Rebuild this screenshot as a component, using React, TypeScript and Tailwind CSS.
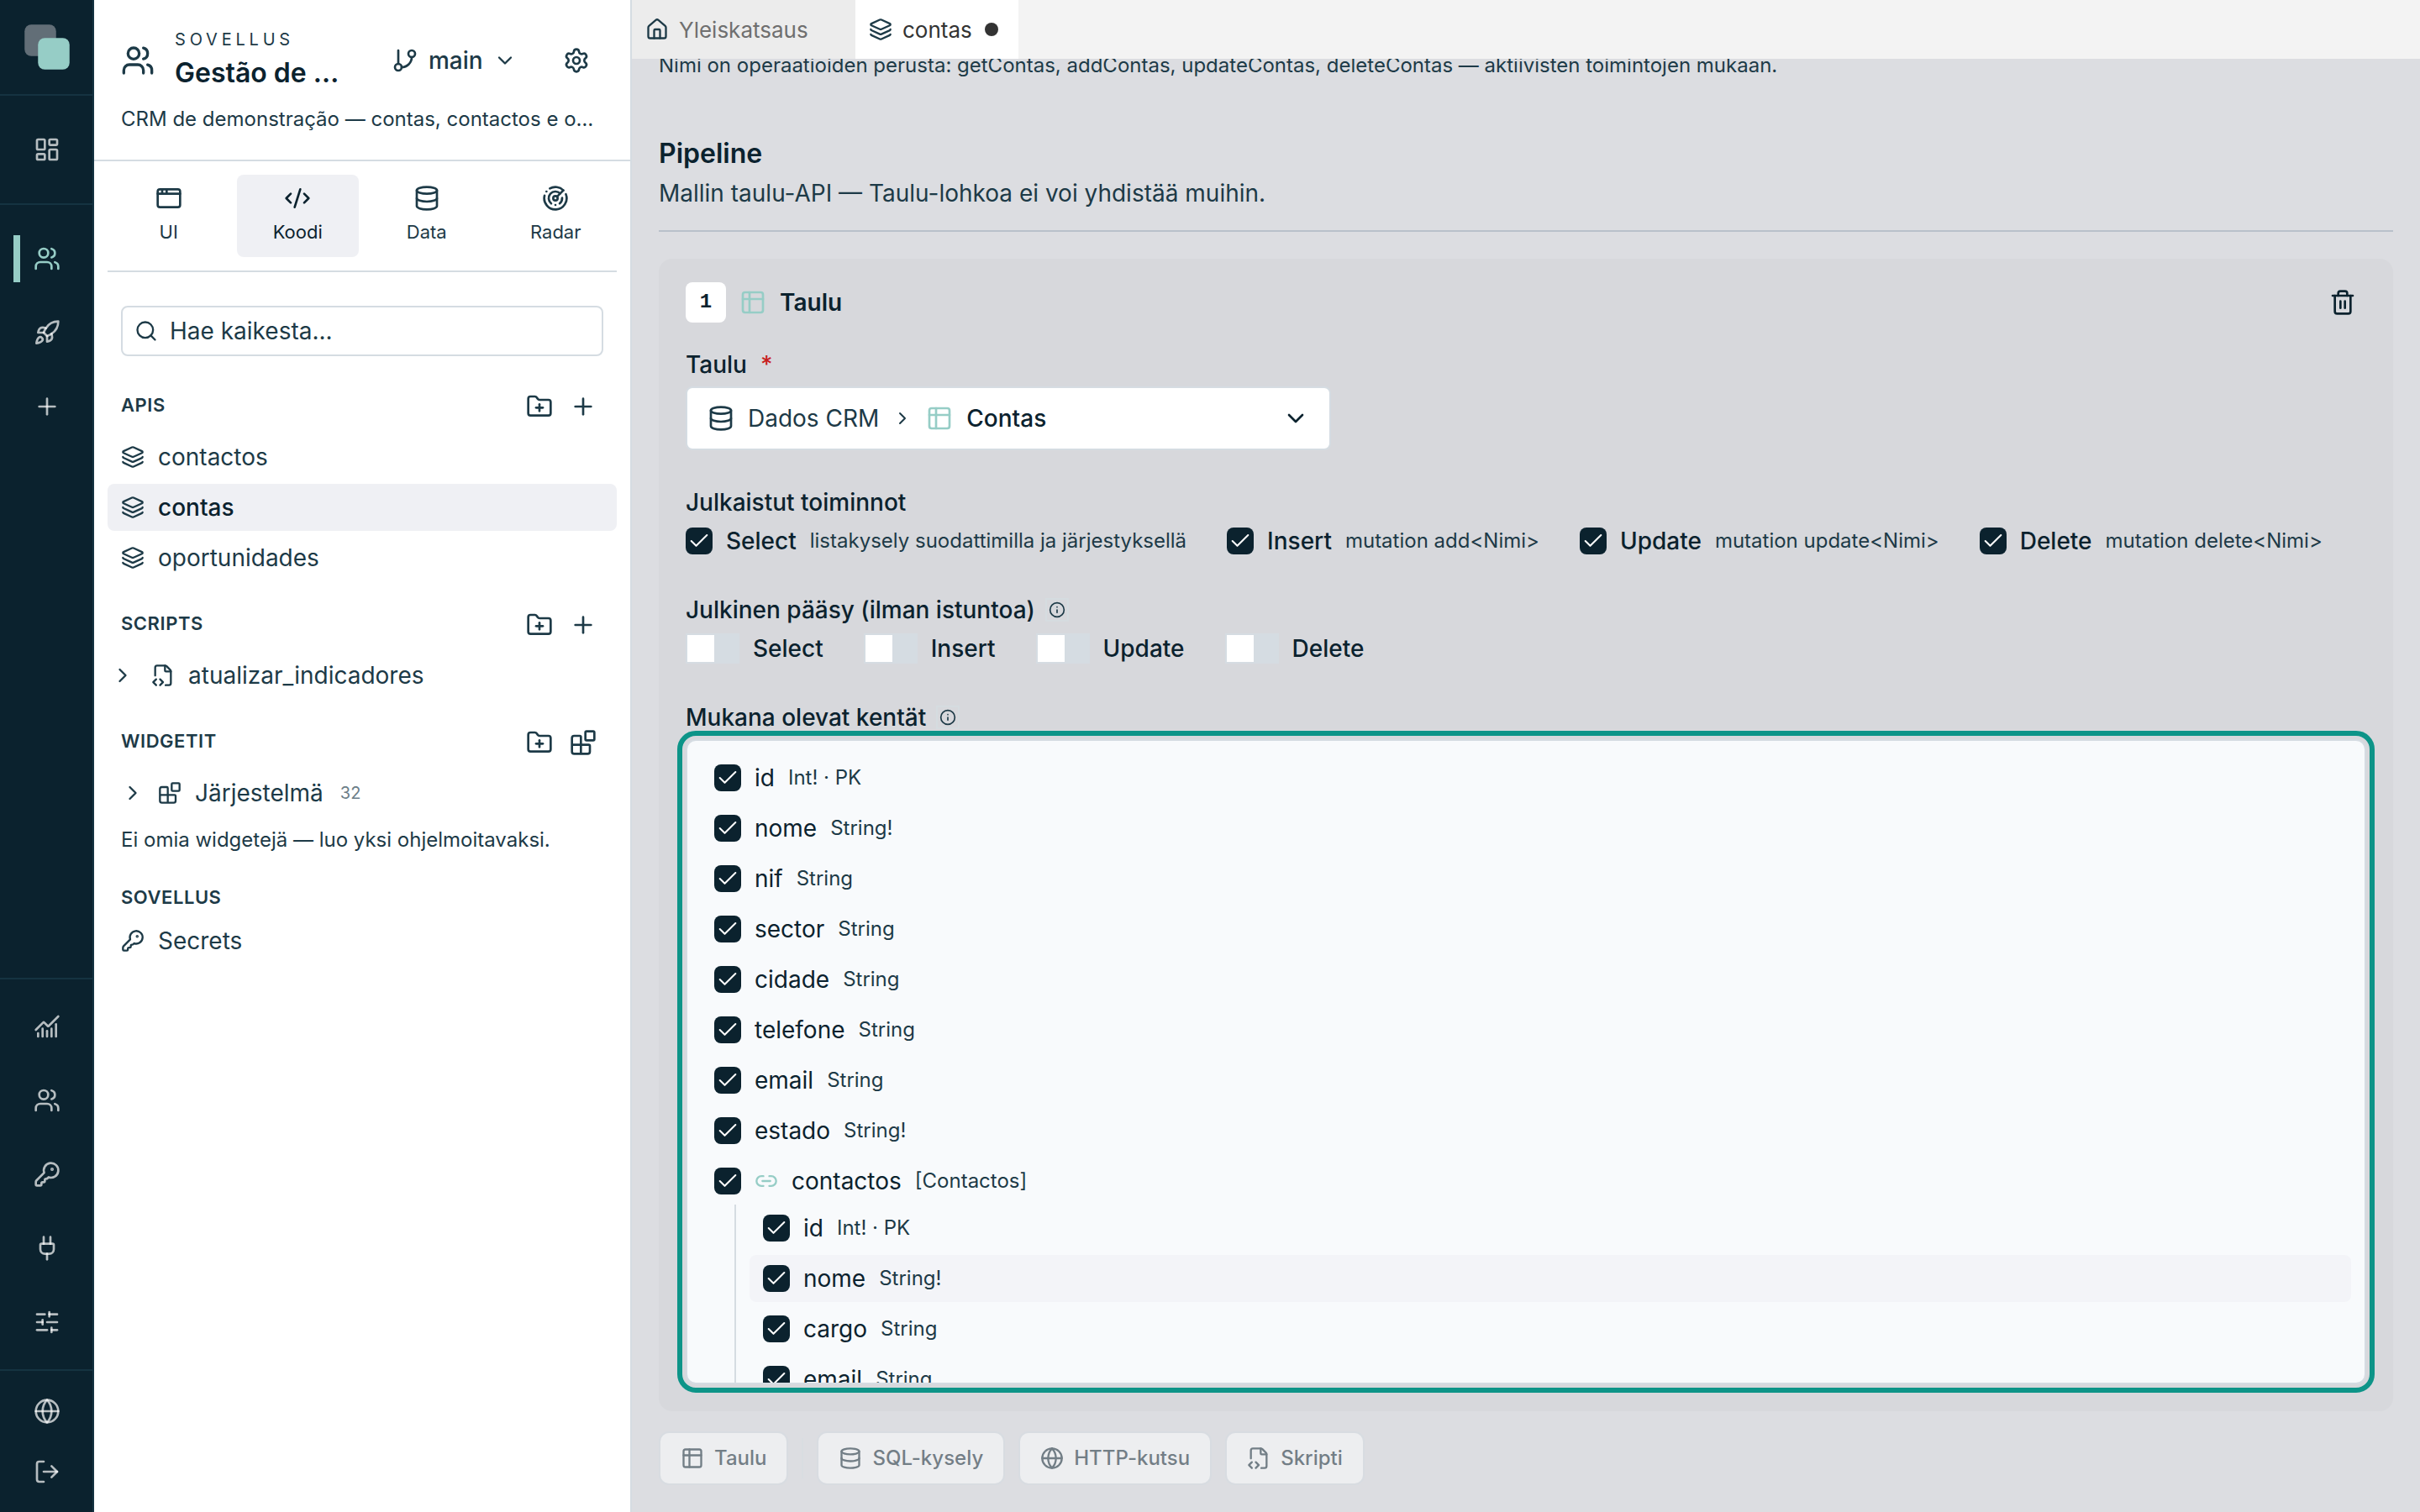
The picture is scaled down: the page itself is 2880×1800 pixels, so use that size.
import React from 'react';
import {
  AppWindow,
  Blocks,
  ChartNoAxesCombined,
  Check,
  ChevronDown,
  ChevronRight,
  CodeXml,
  Database,
  FolderPlus,
  GitBranch,
  Globe,
  House,
  Info,
  KeyRound,
  Layers,
  LayoutDashboard,
  Link2,
  LogOut,
  Plug,
  Plus,
  Radar,
  Rocket,
  Search,
  Settings,
  SlidersHorizontal,
  Trash2,
  Users,
} from 'lucide-react';

interface IconProps {
  size?: number;
  className?: string;
}

const TableIcon: React.FC<IconProps> = ({ size = 32, className }) => (
  <svg
    width={size}
    height={size}
    viewBox="0 0 24 24"
    fill="none"
    stroke="currentColor"
    strokeWidth={2}
    strokeLinecap="round"
    strokeLinejoin="round"
    className={className}
  >
    <rect x="3" y="3" width="18" height="18" rx="2" />
    <path d="M3 9h18" />
    <path d="M9 3v18" />
  </svg>
);

const FileScriptIcon: React.FC<IconProps> = ({ size = 28, className }) => (
  <svg
    width={size}
    height={size}
    viewBox="0 0 24 24"
    fill="none"
    stroke="currentColor"
    strokeWidth={2}
    strokeLinecap="round"
    strokeLinejoin="round"
    className={className}
  >
    <path d="M4 12.15V4a2 2 0 0 1 2-2h8a2.4 2.4 0 0 1 1.706.706l3.588 3.588A2.4 2.4 0 0 1 20 8v12a2 2 0 0 1-2 2h-3.35" />
    <path d="M14 2v5a1 1 0 0 0 1 1h5" />
    <path d="m5 16-3 3 3 3" />
    <path d="m9 22 3-3-3-3" />
  </svg>
);

const Logo = () => (
  <svg width="54" height="54" viewBox="0 0 54 54" fill="none">
    <rect x="0.25" y="0.25" width="37.5" height="37.5" rx="8" fill="#626e77" />
    <rect x="16.25" y="16.25" width="37.5" height="37.5" rx="8" fill="#96cdc6" />
  </svg>
);

const RailButton = ({ children, active }: { children: React.ReactNode; active?: boolean }) => (
  <button
    type="button"
    className={`relative flex h-[72px] w-full items-center justify-center ${
      active ? 'text-[#96cdc6]' : 'text-white/70'
    }`}
  >
    {active && <span className="absolute left-[14px] top-2 h-14 w-2 bg-[#96cdc6]" />}
    {children}
  </button>
);

const Rail = () => (
  <nav className="flex w-28 shrink-0 flex-col border-r-2 border-[#153341] bg-[#0b222e]">
    <div className="flex h-[114px] items-center justify-center border-b-2 border-[#153341] pl-[2px]">
      <Logo />
    </div>
    <div className="flex h-[130px] flex-col justify-center border-b-2 border-[#153341] pl-[2px]">
      <RailButton>
        <LayoutDashboard size={32} />
      </RailButton>
    </div>
    <div className="flex flex-col gap-4 pl-[2px] pt-7">
      <RailButton active>
        <Users size={32} />
      </RailButton>
      <RailButton>
        <Rocket size={32} />
      </RailButton>
      <RailButton>
        <Plus size={32} />
      </RailButton>
    </div>
    <div className="mt-auto flex h-[468px] flex-col gap-4 border-y-2 border-[#153341] pl-[2px] pt-5">
      <RailButton>
        <ChartNoAxesCombined size={32} />
      </RailButton>
      <RailButton>
        <Users size={32} />
      </RailButton>
      <RailButton>
        <KeyRound size={32} />
      </RailButton>
      <RailButton>
        <Plug size={32} />
      </RailButton>
      <RailButton>
        <SlidersHorizontal size={32} />
      </RailButton>
    </div>
    <div className="flex h-[168px] flex-col pl-[2px] pt-3">
      <RailButton>
        <Globe size={32} />
      </RailButton>
      <RailButton>
        <LogOut size={32} />
      </RailButton>
    </div>
  </nav>
);

const modes = [
  { label: 'UI', icon: AppWindow },
  { label: 'Koodi', icon: CodeXml, active: true },
  { label: 'Data', icon: Database },
  { label: 'Radar', icon: Radar },
];

const SectionHeader = ({ title, children }: { title: string; children?: React.ReactNode }) => (
  <div className="flex h-16 items-center justify-between px-4">
    <span className="pb-1 text-[22px] font-semibold tracking-[0.025em]">{title}</span>
    <span className="flex gap-5 pr-2">{children}</span>
  </div>
);

const TreeItem = ({ icon, label, active }: { icon: React.ReactNode; label: string; active?: boolean }) => (
  <div
    className={`flex h-14 items-center gap-4 rounded-lg px-4 text-[28px] ${
      active ? 'bg-[#eff0f4] font-medium' : ''
    }`}
  >
    {icon}
    <span className={active ? 'text-[#0b222e]' : ''}>{label}</span>
  </div>
);

const Sidebar = () => (
  <aside className="flex w-[640px] shrink-0 flex-col border-r-2 border-[#d5dce2] bg-white text-[#1d3a47]">
    <header className="flex h-48 flex-col border-b-2 border-[#d5dce2] px-8 pt-8">
      <div className="flex h-20 items-center">
        <Users size={40} className="shrink-0" />
        <div className="ml-6 w-[208px] whitespace-nowrap">
          <div className="text-[20px] leading-7 tracking-[0.24em]">SOVELLUS</div>
          <div className="mt-[2px] text-[32px] leading-[48px] font-semibold text-[#0b222e]">Gestão de …</div>
        </div>
        <button type="button" className="ml-[50px] flex items-center gap-3 text-[28px] font-medium">
          <GitBranch size={32} />
          <span>main</span>
          <ChevronDown size={28} />
        </button>
        <Settings size={32} className="ml-auto mr-4" />
      </div>
      <p className="mt-[14px] text-[24px] leading-8 whitespace-nowrap">
        CRM de demonstração — contas, contactos e o…
      </p>
    </header>

    <div className="flex flex-col px-4 pt-4">
      <div className="grid h-[116px] grid-cols-4 gap-2 border-b-2 border-[#d5dce2]">
        {modes.map(({ label, icon: Icon, active }) => (
          <button
            key={label}
            type="button"
            className={`flex h-[98px] flex-col items-center gap-2 rounded-lg pt-3 text-[22px] ${
              active ? 'bg-[#eff0f4] text-[#0b222e]' : ''
            }`}
          >
            <Icon size={32} />
            <span className="leading-8">{label}</span>
          </button>
        ))}
      </div>

      <div className="mx-4 mt-10 flex h-[60px] items-center gap-[14px] rounded-lg border-2 border-[#d5dce2] px-[14px] text-[28px]">
        <Search size={28} />
        <span>Hae kaikesta...</span>
      </div>

      <div className="mt-7">
        <SectionHeader title="APIS">
          <FolderPlus size={32} />
          <Plus size={32} />
        </SectionHeader>
        <div className="flex flex-col gap-1">
          <TreeItem icon={<Layers size={28} />} label="contactos" />
          <TreeItem icon={<Layers size={28} />} label="contas" active />
          <TreeItem icon={<Layers size={28} />} label="oportunidades" />
        </div>
      </div>

      <div className="mt-5">
        <SectionHeader title="SCRIPTS">
          <FolderPlus size={32} />
          <Plus size={32} />
        </SectionHeader>
        <div className="flex h-14 items-center pl-1 text-[28px]">
          <ChevronRight size={28} />
          <FileScriptIcon size={28} className="ml-5" />
          <span className="ml-4">atualizar_indicadores</span>
        </div>
      </div>

      <div className="mt-5">
        <SectionHeader title="WIDGETIT">
          <FolderPlus size={32} />
          <Blocks size={32} />
        </SectionHeader>
        <div className="flex h-14 items-center gap-4 px-4 text-[28px]">
          <ChevronRight size={28} />
          <Blocks size={28} />
          <span>Järjestelmä</span>
          <span className="ml-1 text-[20px] text-[#6c7e88]">32</span>
        </div>
        <p className="mt-3 px-4 text-[24px] leading-8">Ei omia widgetejä — luo yksi ohjelmoitavaksi.</p>
      </div>

      <div className="mt-[22px]">
        <SectionHeader title="SOVELLUS" />
        <div className="-mt-[10px]">
          <TreeItem icon={<KeyRound size={28} />} label="Secrets" />
        </div>
      </div>
    </div>
  </aside>
);

const TabBar = () => (
  <div className="relative z-10 flex h-[70px] shrink-0 bg-[#f3f3f3] text-[26px]">
    <div className="flex w-[266px] items-center gap-3 bg-[#ececec] pl-4">
      <House size={28} className="text-[#1d3a47]" />
      <span className="text-[#6f6f6f]">Yleiskatsaus</span>
    </div>
    <div className="flex w-[194px] items-center gap-3 bg-white pl-4">
      <Layers size={28} className="text-[#1d3a47]" />
      <span className="text-[#333333]">contas</span>
      <span className="ml-[3px] size-4 rounded-full bg-[#333333]" />
    </div>
  </div>
);

const Checkbox = () => (
  <span className="flex size-8 shrink-0 items-center justify-center rounded-lg bg-[#0b222e] text-white">
    <Check size={28} strokeWidth={1.75} />
  </span>
);

const operations = [
  { name: 'Select', hint: 'listakysely suodattimilla ja järjestyksellä' },
  { name: 'Insert', hint: 'mutation add<Nimi>' },
  { name: 'Update', hint: 'mutation update<Nimi>' },
  { name: 'Delete', hint: 'mutation delete<Nimi>' },
];

interface Field {
  name: string;
  type: string;
  relation?: boolean;
  hovered?: boolean;
}

const fields: Field[] = [
  { name: 'id', type: 'Int! · PK' },
  { name: 'nome', type: 'String!' },
  { name: 'nif', type: 'String' },
  { name: 'sector', type: 'String' },
  { name: 'cidade', type: 'String' },
  { name: 'telefone', type: 'String' },
  { name: 'email', type: 'String' },
  { name: 'estado', type: 'String!' },
  { name: 'contactos', type: '[Contactos]', relation: true },
];

const contactFields: Field[] = [
  { name: 'id', type: 'Int! · PK' },
  { name: 'nome', type: 'String!', hovered: true },
  { name: 'cargo', type: 'String' },
  { name: 'email', type: 'String' },
];

const FieldRow: React.FC<{ field: Field }> = ({ field }) => (
  <div
    className={`flex h-14 shrink-0 items-center gap-4 rounded-lg px-4 ${field.hovered ? 'bg-[#f3f4f8]' : ''}`}
  >
    <Checkbox />
    {field.relation && <Link2 size={28} className="text-[#96cdc6]" />}
    <span className="text-[28px] text-[#0b222e]">{field.name}</span>
    <span className="text-[24px]">{field.type}</span>
  </div>
);

const InfoHint = () => (
  <span className="flex size-7 items-center justify-center border-2 border-[#d5dce0] text-[#1d3a47]">
    <Info size={20} className="shrink-0" />
  </span>
);

const addButtons = [
  { label: 'SQL-kysely', icon: Database },
  { label: 'HTTP-kutsu', icon: Globe },
  { label: 'Skripti', icon: FileScriptIcon },
];

const AddButton = ({ icon: Icon, label }: { icon: React.ComponentType<IconProps>; label: string }) => (
  <button
    type="button"
    className="flex h-16 items-center gap-3 rounded-xl border-2 border-[#d5dce2] bg-white px-6 text-[24px] font-medium text-[#0b222e] opacity-50"
  >
    <Icon size={28} />
    <span>{label}</span>
  </button>
);

const StageCard = () => (
  <section className="mt-8 h-[1372px] rounded-2xl bg-[#d7d8dc] px-8 pt-7">
    <div className="flex h-12 items-center gap-4">
      <span className="flex size-12 items-center justify-center rounded-lg bg-white font-['Liberation_Mono',monospace] text-[24px] font-bold text-[#0b222e]">
        1
      </span>
      <TableIcon size={32} className="text-[#96cdc6]" />
      <span className="text-[28px] font-semibold text-[#0b222e]">Taulu</span>
      <Trash2 size={32} className="ml-auto mr-3 text-[#0b222e]" />
    </div>

    <div className="mt-7 flex h-11 items-center gap-4 text-[28px] font-medium text-[#0b222e]">
      <span>Taulu</span>
      <span className="text-[#c81e1e]">*</span>
    </div>
    <div className="mt-1 flex h-[76px] w-[768px] items-center rounded-lg border-2 border-[#d5dce2] bg-white px-6 text-[28px]">
      <Database size={32} />
      <span className="ml-4">Dados CRM</span>
      <ChevronRight size={24} className="ml-4" />
      <TableIcon size={32} className="ml-4 text-[#96cdc6]" />
      <span className="ml-4 font-medium text-[#0b222e]">Contas</span>
      <ChevronDown size={32} className="ml-auto text-[#0b222e]" />
    </div>

    <div className="mt-10 flex h-11 items-center text-[28px] font-medium text-[#0b222e]">Julkaistut toiminnot</div>
    <div className="mt-2 flex h-8 items-center gap-12">
      {operations.map((op) => (
        <div key={op.name} className="flex items-center gap-4">
          <Checkbox />
          <span className="text-[28px] leading-8 font-medium text-[#0b222e]">{op.name}</span>
          <span className="text-[24px] leading-8">{op.hint}</span>
        </div>
      ))}
    </div>

    <div className="mt-11 flex h-11 items-center gap-3 text-[28px] font-medium text-[#0b222e]">
      <span>Julkinen pääsy (ilman istuntoa)</span>
      <InfoHint />
    </div>
    <div className="mt-[6px] flex h-9 items-center gap-12">
      {operations.map((op) => (
        <div key={op.name} className="flex items-center gap-4">
          <span className="flex h-9 w-16 bg-[#d5dce2] p-[2px]">
            <span className="size-8 bg-white" />
          </span>
          <span className="text-[28px] leading-8 font-medium text-[#0b222e]">{op.name}</span>
        </div>
      ))}
    </div>

    <div className="mt-[42px] flex h-11 items-center gap-3 text-[28px] font-medium text-[#0b222e]">
      <span>Mukana olevat kentät</span>
      <InfoHint />
    </div>
    <div className="mt-1 flex h-[768px] flex-col gap-1 overflow-hidden rounded-xl border-2 border-[#d5dce2] bg-[#f8fafc] p-4 outline-6 outline-offset-4 outline-[#0d9488]">
      {fields.map((field) => (
        <FieldRow key={field.name} field={field} />
      ))}
      <div className="-mt-1 ml-10 flex shrink-0 flex-col gap-1 border-l-2 border-[#d5dce2] pl-4">
        {contactFields.map((field) => (
          <FieldRow key={field.name} field={field} />
        ))}
      </div>
    </div>
  </section>
);

const Editor = () => (
  <main className="flex min-w-0 flex-1 flex-col bg-[#dcdde1] text-[#1d3a47]">
    <TabBar />
    <div className="flex flex-col px-8">
      <p className="-mt-2 text-[24px] leading-8">
        Nimi on operaatioiden perusta: getContas, addContas, updateContas, deleteContas — aktiivisten toimintojen
        mukaan.
      </p>
      <header className="mt-[65px] flex h-[117px] flex-col border-b-2 border-[#b9c1ca]">
        <h2 className="text-[32px] leading-[48px] font-semibold text-[#0b222e]">Pipeline</h2>
        <p className="text-[28px] leading-[46px]">Mallin taulu-API — Taulu-lohkoa ei voi yhdistää muihin.</p>
      </header>
      <StageCard />
      <div className="mt-6 flex items-center">
        <AddButton icon={TableIcon} label="Taulu" />
        <span className="mx-4 h-12 w-[2px] bg-[#d8dde1]" />
        <div className="flex gap-4">
          {addButtons.map((button) => (
            <AddButton key={button.label} icon={button.icon} label={button.label} />
          ))}
        </div>
      </div>
    </div>
  </main>
);

export default function App() {
  return (
    <div className="flex h-[1800px] w-[2880px] overflow-hidden bg-[#dcdde1] font-['Inter',sans-serif]">
      <Rail />
      <Sidebar />
      <Editor />
    </div>
  );
}
